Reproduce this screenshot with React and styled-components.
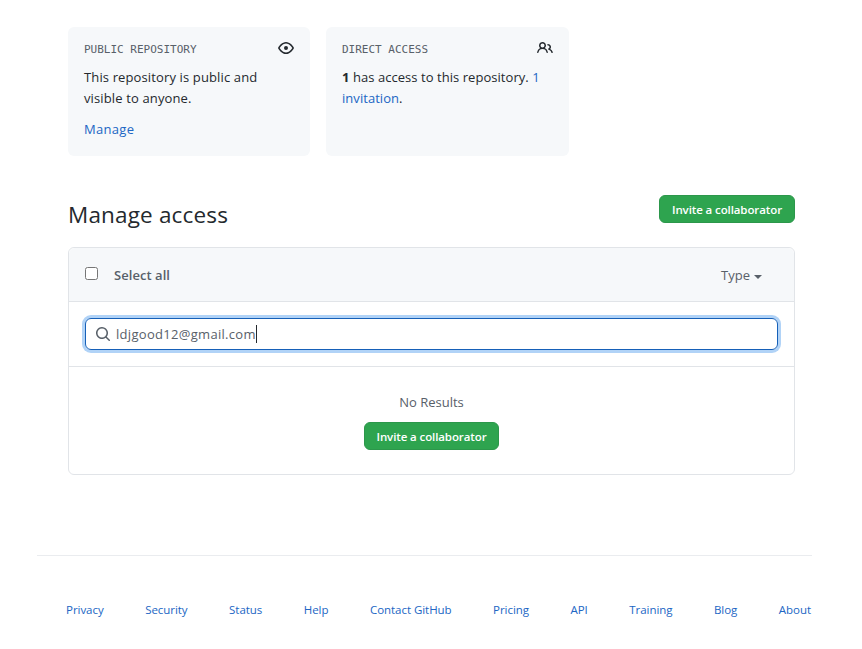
import React from 'react';
import styled, { createGlobalStyle } from 'styled-components';

const GlobalStyle = createGlobalStyle`
  * { box-sizing: border-box; }
  body {
    margin: 0;
    background: #fff;
    color: #24292e;
    font-family: "Open Sans", "Noto Sans", sans-serif;
    font-size: 13px;
    line-height: 21px;
  }
  p, h2 { margin: 0; font-weight: 400; }
`;

const Page = styled.div`
  width: 862px;
  height: 649px;
  padding: 27px 50px 0 37px;
  overflow: hidden;
`;

const Content = styled.main`
  padding: 0 17px 0 31px;
`;

const Cards = styled.div`
  display: grid;
  grid-template-columns: 242px 243px;
  gap: 16px;
`;

const Card = styled.section`
  height: 129px;
  padding: 13px 16px;
  border-radius: 6px;
  background: #f6f8fa;
`;

const CardHead = styled.div`
  display: flex;
  align-items: center;
  justify-content: space-between;
  height: 16px;
  margin-bottom: 11px;
`;

const CardLabel = styled.span`
  padding-top: 4px;
  color: #586069;
  font: 11px/16px "DejaVu Sans Mono", monospace;
`;

const CardText = styled.p`
  letter-spacing: ${(p) => p.$tracking || '0'};
  white-space: nowrap;
`;

const Link = styled.a`
  color: #2166c4;
  text-decoration: none;
`;

const ManageRow = styled.p`
  margin-top: 10px;
  letter-spacing: 0.3px;
`;

const Icon = styled.svg`
  width: 16px;
  height: 16px;
  flex: none;
  fill: ${(p) => p.$color || '#24292e'};
`;

const TitleRow = styled.div`
  display: flex;
  justify-content: space-between;
  height: 52px;
  margin-top: 39px;
`;

const Title = styled.h2`
  font-size: 22.5px;
  line-height: 40px;
  letter-spacing: 0.17px;
`;

const Button = styled.button`
  width: ${(p) => p.$width || '136px'};
  height: 28px;
  padding: 1px 0 0;
  border: 1px solid #2c974b;
  border-radius: 6px;
  background: #2ea44f;
  color: #fff;
  font: 600 11.5px/20px "Open Sans", sans-serif;
  letter-spacing: -0.1px;
  white-space: nowrap;
`;

const Box = styled.section`
  height: 228px;
  border: 1px solid #e1e4e8;
  border-radius: 6px;
  color: #586069;
`;

const BoxHeader = styled.div`
  display: flex;
  align-items: center;
  height: 54px;
  padding: 0 32px 0 16px;
  border-bottom: 1px solid #e1e4e8;
  border-radius: 6px 6px 0 0;
  background: #f6f8fa;
`;

const Checkbox = styled.span`
  width: 13px;
  height: 13px;
  margin: -2px 16px 0 0;
  border: 1px solid #767676;
  border-radius: 2.5px;
  background: #fff;
`;

const SelectLabel = styled.span`
  padding-top: 2px;
  font-weight: 600;
  letter-spacing: 0.05px;
`;

const TypeMenu = styled.span`
  display: flex;
  align-items: center;
  gap: 4px;
  margin-left: auto;
  padding-top: 2px;
`;

const Caret = styled.i`
  margin-top: 2px;
  border: 4px solid transparent;
  border-top-color: #586069;
  border-bottom: 0;
`;

const SearchRow = styled.div`
  height: 65px;
  padding: 16px 16px 0;
  border-bottom: 1px solid #e1e4e8;
`;

const SearchField = styled.div`
  display: flex;
  align-items: center;
  height: 32px;
  padding-left: 9px;
  border: 1px solid #1660b8;
  border-radius: 6px;
  box-shadow: 0 0 0 3px #b1d3f7;
`;

const SearchText = styled.span`
  margin-left: 5px;
  letter-spacing: 0.3px;
`;

const TextCursor = styled.i`
  width: 1px;
  height: 18px;
  background: #24292e;
`;

const Results = styled.div`
  display: flex;
  flex-direction: column;
  align-items: center;
  padding-top: 25px;
  gap: 9px;
`;

const Footer = styled.footer`
  display: flex;
  justify-content: space-between;
  margin-top: 80px;
  padding: 44px 1px 0 29px;
  border-top: 1px solid #eaecef;
  font-size: 11.5px;
  line-height: 20px;
  letter-spacing: -0.04px;
`;

const EYE =
  'M1.679 7.932c.412-.621 1.242-1.75 2.366-2.717C5.175 4.242 6.527 3.5 8 3.5c1.473 0 2.824.742 3.955 1.715 1.124.967 1.954 2.096 2.366 2.717a.119.119 0 010 .136c-.412.621-1.242 1.75-2.366 2.717C10.825 11.758 9.473 12.5 8 12.5c-1.473 0-2.824-.742-3.955-1.715C2.92 9.818 2.09 8.69 1.679 8.068a.119.119 0 010-.136zM8 2c-1.981 0-3.67.992-4.933 2.078C1.797 5.169.88 6.423.43 7.1a1.619 1.619 0 000 1.798c.45.678 1.367 1.932 2.637 3.024C4.329 13.008 6.019 14 8 14c1.981 0 3.67-.992 4.933-2.078 1.27-1.091 2.187-2.345 2.637-3.023a1.619 1.619 0 000-1.798c-.45-.678-1.367-1.932-2.637-3.023C11.671 2.992 9.981 2 8 2zm0 8a2 2 0 100-4 2 2 0 000 4z';
const PEOPLE =
  'M5.5 3.5a2 2 0 100 4 2 2 0 000-4zM2 5.5a3.5 3.5 0 115.898 2.549 5.507 5.507 0 013.034 4.084.75.75 0 11-1.482.235 4.001 4.001 0 00-7.9 0 .75.75 0 01-1.482-.236A5.507 5.507 0 013.102 8.05 3.49 3.49 0 012 5.5zM11 4a.75.75 0 100 1.5 1.5 1.5 0 01.666 2.844.75.75 0 00-.416.672v.352a.75.75 0 00.574.73c1.2.289 2.162 1.2 2.522 2.372a.75.75 0 101.434-.44 5.01 5.01 0 00-2.56-3.012A3 3 0 0011 4z';
const SEARCH =
  'M11.5 7a4.499 4.499 0 11-8.998 0A4.499 4.499 0 0111.5 7zm-.82 4.74a6 6 0 111.06-1.06l3.04 3.04a.75.75 0 11-1.06 1.06l-3.04-3.04z';

function Glyph({ d, color }) {
  return (
    <Icon viewBox="0 0 16 16" $color={color} aria-hidden="true">
      <path fillRule="evenodd" d={d} />
    </Icon>
  );
}

const FOOTER_LINKS = ['Privacy', 'Security', 'Status', 'Help', 'Contact GitHub', 'Pricing', 'API', 'Training', 'Blog', 'About'];

export default function App() {
  return (
    <Page>
      <GlobalStyle />
      <Content>
        <Cards>
          <Card>
            <CardHead>
              <CardLabel>PUBLIC REPOSITORY</CardLabel>
              <Glyph d={EYE} />
            </CardHead>
            <CardText $tracking="0.13px">This repository is public and<br />visible to anyone.</CardText>
            <ManageRow><Link>Manage</Link></ManageRow>
          </Card>
          <Card>
            <CardHead>
              <CardLabel>DIRECT ACCESS</CardLabel>
              <Glyph d={PEOPLE} />
            </CardHead>
            <CardText $tracking="0.05px">
              <b>1</b> has access to this repository. <Link>1<br />invitation</Link>.
            </CardText>
          </Card>
        </Cards>
        <TitleRow>
          <Title>Manage access</Title>
          <Button>Invite a collaborator</Button>
        </TitleRow>
        <Box>
          <BoxHeader>
            <Checkbox role="checkbox" aria-checked="false" />
            <SelectLabel>Select all</SelectLabel>
            <TypeMenu>Type<Caret /></TypeMenu>
          </BoxHeader>
          <SearchRow>
            <SearchField>
              <Glyph d={SEARCH} color="#586069" />
              <SearchText>ldjgood12@gmail.com</SearchText>
              <TextCursor />
            </SearchField>
          </SearchRow>
          <Results>
            <p>No Results</p>
            <Button $width="135px">Invite a collaborator</Button>
          </Results>
        </Box>
      </Content>
      <Footer>
        {FOOTER_LINKS.map((label) => <Link key={label}>{label}</Link>)}
      </Footer>
    </Page>
  );
}
